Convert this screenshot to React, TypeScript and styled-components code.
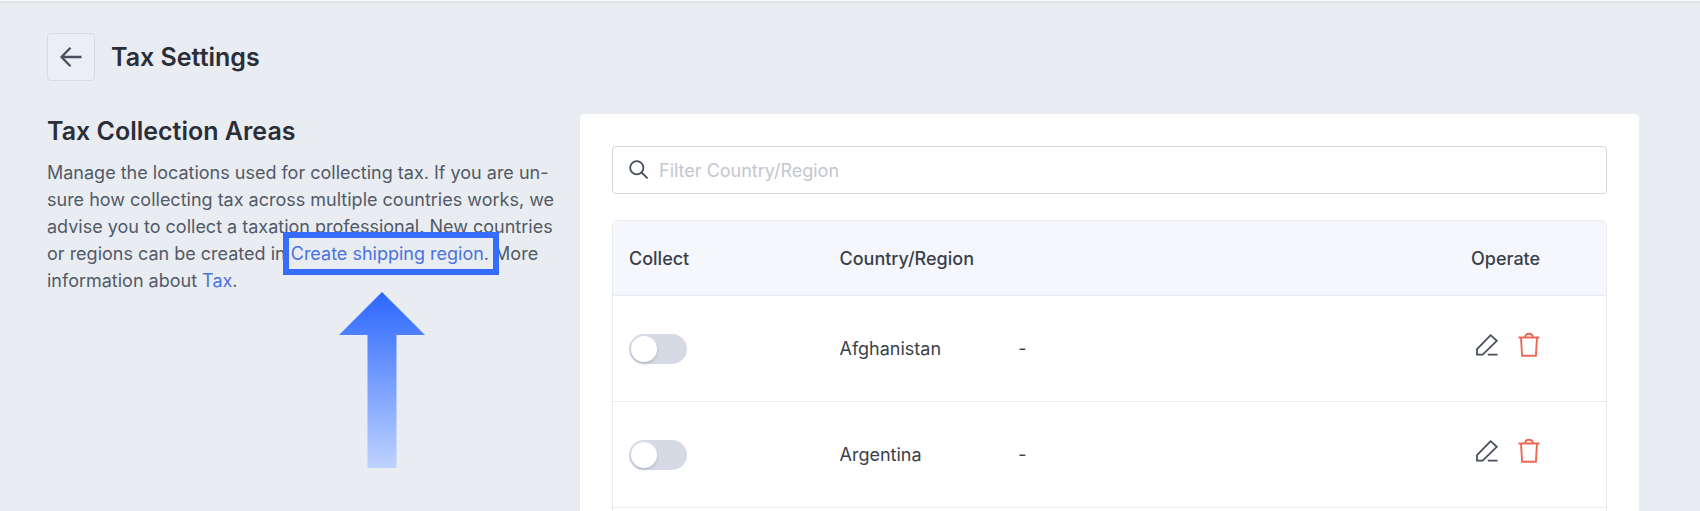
import React, { useState } from 'react';
import styled, { createGlobalStyle } from 'styled-components';

const GlobalStyle = createGlobalStyle`
  *, *::before, *::after { box-sizing: border-box; }
  html { background: #e9ecf1; overflow: hidden; }
  body {
    margin: 0;
    font-family: Inter, "Liberation Sans", sans-serif;
    font-size: 18px;
    line-height: 27px;
    color: #525a68;
  }
  button, input { font: inherit; color: inherit; }
`;

const Page = styled.div`
  height: 100vh;
  overflow: hidden;
  border-top: 1px solid #fafafa;
  background: linear-gradient(#dfe1e4, #e9ecf1 4px);
`;

const Header = styled.header`
  display: flex;
  align-items: center;
  gap: 16px;
  padding: 32px 61px 33px 47px;
`;

const BackButton = styled.button`
  display: flex;
  align-items: center;
  justify-content: center;
  width: 48px;
  height: 48px;
  padding: 0;
  border: 1px solid #d7dbe3;
  border-radius: 4px;
  background: #ebeef4;
  color: #474f5e;
`;

const PageTitle = styled.h1`
  margin: 0;
  font-size: 25px;
  line-height: 34px;
  font-weight: 600;
  color: #2a2e39;
`;

const Content = styled.main`
  display: flex;
  align-items: flex-start;
  padding: 0 61px 0 47px;
`;

const Intro = styled.section`
  flex: 0 0 533px;
  padding-right: 20px;
`;

const SectionTitle = styled.h2`
  margin: 0 0 11px;
  font-size: 25px;
  line-height: 34px;
  font-weight: 600;
  color: #2a2e39;
`;

const Description = styled.p`
  margin: 0;
`;

const TextLink = styled.a`
  color: #4b73df;
  text-decoration: none;
`;

const Highlighted = styled.span`
  position: relative;
  white-space: nowrap;
`;

const HighlightBox = styled.span`
  position: absolute;
  inset: -11px -10px -11px -8px;
  border: 6px solid #356dff;
  pointer-events: none;
`;

const ArrowUp = styled.svg`
  position: absolute;
  top: 49px;
  left: 48px;
  pointer-events: none;
`;

const Card = styled.section`
  flex: 1;
  min-width: 0;
  padding: 32px;
  border-radius: 4px;
  background: #fff;
`;

const SearchField = styled.label`
  display: flex;
  align-items: center;
  gap: 10px;
  height: 48px;
  padding: 0 16px;
  margin-bottom: 26px;
  border: 1px solid #d3d7df;
  border-radius: 4px;
  color: #474f5e;
`;

const SearchInput = styled.input`
  flex: 1;
  min-width: 0;
  padding: 0;
  border: 0;
  outline: 0;
  background: transparent;
  &::placeholder { color: #c3c6d1; opacity: 1; }
`;

const TableFrame = styled.div`
  overflow: hidden;
  padding-bottom: 32px;
  border: 1px solid #e8ebf2;
  border-radius: 6px;
`;

const Table = styled.table`
  width: 100%;
  table-layout: fixed;
  border-collapse: separate;
  border-spacing: 0;
  color: #3a3f4a;
`;

const HeadCell = styled.th<{ $width?: string }>`
  width: ${(p) => p.$width ?? 'auto'};
  height: 75px;
  padding: 0 16px;
  border-bottom: 1px solid #e8ebf2;
  background: #f6f7fc;
  font-weight: 500;
  text-align: left;
  white-space: nowrap;
`;

const Cell = styled.td`
  height: 106px;
  padding: 0 16px;
  border-bottom: 1px solid #e8ebf2;
`;

const Switch = styled.input`
  appearance: none;
  display: block;
  width: 58px;
  height: 30px;
  margin: 0;
  padding: 2px;
  border-radius: 15px;
  background: #d6dae5;
  &::before {
    content: "";
    display: block;
    width: 26px;
    height: 26px;
    border-radius: 50%;
    background: #fff;
    box-shadow: 0 2px 3px rgba(50, 60, 90, 0.2);
  }
  &:checked { background: #356dff; }
  &:checked::before { margin-left: auto; }
`;

const Actions = styled.div`
  display: flex;
  gap: 18px;
  padding: 0 0 8px 4px;
`;

const IconButton = styled.button<{ $danger?: boolean }>`
  display: flex;
  padding: 0;
  border: 0;
  background: none;
  color: ${(p) => (p.$danger ? '#ea6a54' : '#474f5e')};
`;

const BackIcon = () => (
  <svg width="24" height="24" viewBox="0 0 24 24" fill="none" stroke="currentColor" strokeWidth="2.3" aria-hidden="true">
    <path d="M22.500 12H2.500M11.500 2.800L2.500 12l9 9.200" />
  </svg>
);

const SearchIcon = () => (
  <svg width="20" height="20" viewBox="0 0 20 20" fill="none" stroke="currentColor" strokeWidth="1.8" aria-hidden="true">
    <circle cx="7.800" cy="7.800" r="6.600" />
    <path d="M12.500 12.500L18.600 18.400" />
  </svg>
);

const EditIcon = () => (
  <svg width="24" height="26" viewBox="0 0 24 26" fill="none" stroke="currentColor" strokeWidth="1.8" aria-hidden="true">
    <path d="M15.700 3.200L2 17v5.700h5.600L21.800 8.800zM12.800 22.700H22.500" />
  </svg>
);

const TrashIcon = () => (
  <svg width="24" height="26" viewBox="0 0 24 26" fill="none" stroke="currentColor" strokeWidth="1.9" aria-hidden="true">
    <path d="M1.500 5.500h21M4 5.500l1.100 18.200h13.800L20 5.500M8 5.500C8.400 0.500 15.600 0.500 16 5.500" />
  </svg>
);

const regions = [
  { name: 'Afghanistan', rate: '-' },
  { name: 'Argentina', rate: '-' },
];

function RegionRow({ name, rate }: { name: string; rate: string }) {
  const [collect, setCollect] = useState(false);
  return (
    <tr>
      <Cell>
        <Switch
          type="checkbox"
          role="switch"
          aria-label={`Collect tax in ${name}`}
          checked={collect}
          onChange={(e) => setCollect(e.target.checked)}
        />
      </Cell>
      <Cell>{name}</Cell>
      <Cell>{rate}</Cell>
      <Cell>
        <Actions>
          <IconButton type="button" aria-label={`Edit ${name}`}><EditIcon /></IconButton>
          <IconButton type="button" $danger aria-label={`Delete ${name}`}><TrashIcon /></IconButton>
        </Actions>
      </Cell>
    </tr>
  );
}

export default function App() {
  return (
    <Page>
      <GlobalStyle />
      <Header>
        <BackButton type="button" aria-label="Back"><BackIcon /></BackButton>
        <PageTitle>Tax Settings</PageTitle>
      </Header>
      <Content>
        <Intro>
          <SectionTitle>Tax Collection Areas</SectionTitle>
          <Description>
            Manage the locations used for collecting tax. If you are un-sure how collecting tax across
            multiple countries works, we advise you to collect a taxation professional. New countries or
            regions can be created in{' '}
            <Highlighted>
              <TextLink href="#shipping">Create shipping region</TextLink>.
              <HighlightBox />
              <ArrowUp width="86" height="176" viewBox="0 0 86 176" aria-hidden="true">
                <defs>
                  <linearGradient id="arrow-fill" x1="0" y1="0" x2="0" y2="1">
                    <stop offset="0" stopColor="#2b66ff" />
                    <stop offset="1" stopColor="#bfd3ff" />
                  </linearGradient>
                </defs>
                <path d="M43 0L86 43H57.500V176H28.500V43H0z" fill="url(#arrow-fill)" />
              </ArrowUp>
            </Highlighted>{' '}
            More information about <TextLink href="#tax">Tax</TextLink>.
          </Description>
        </Intro>
        <Card>
          <SearchField>
            <SearchIcon />
            <SearchInput type="text" placeholder="Filter Country/Region" aria-label="Filter Country/Region" />
          </SearchField>
          <TableFrame>
            <Table>
              <thead>
                <tr>
                  <HeadCell $width="21.2%">Collect</HeadCell>
                  <HeadCell $width="18%">Country/Region</HeadCell>
                  <HeadCell aria-label="Rate" />
                  <HeadCell $width="151px">Operate</HeadCell>
                </tr>
              </thead>
              <tbody>
                {regions.map((r) => <RegionRow key={r.name} {...r} />)}
              </tbody>
            </Table>
          </TableFrame>
        </Card>
      </Content>
    </Page>
  );
}
